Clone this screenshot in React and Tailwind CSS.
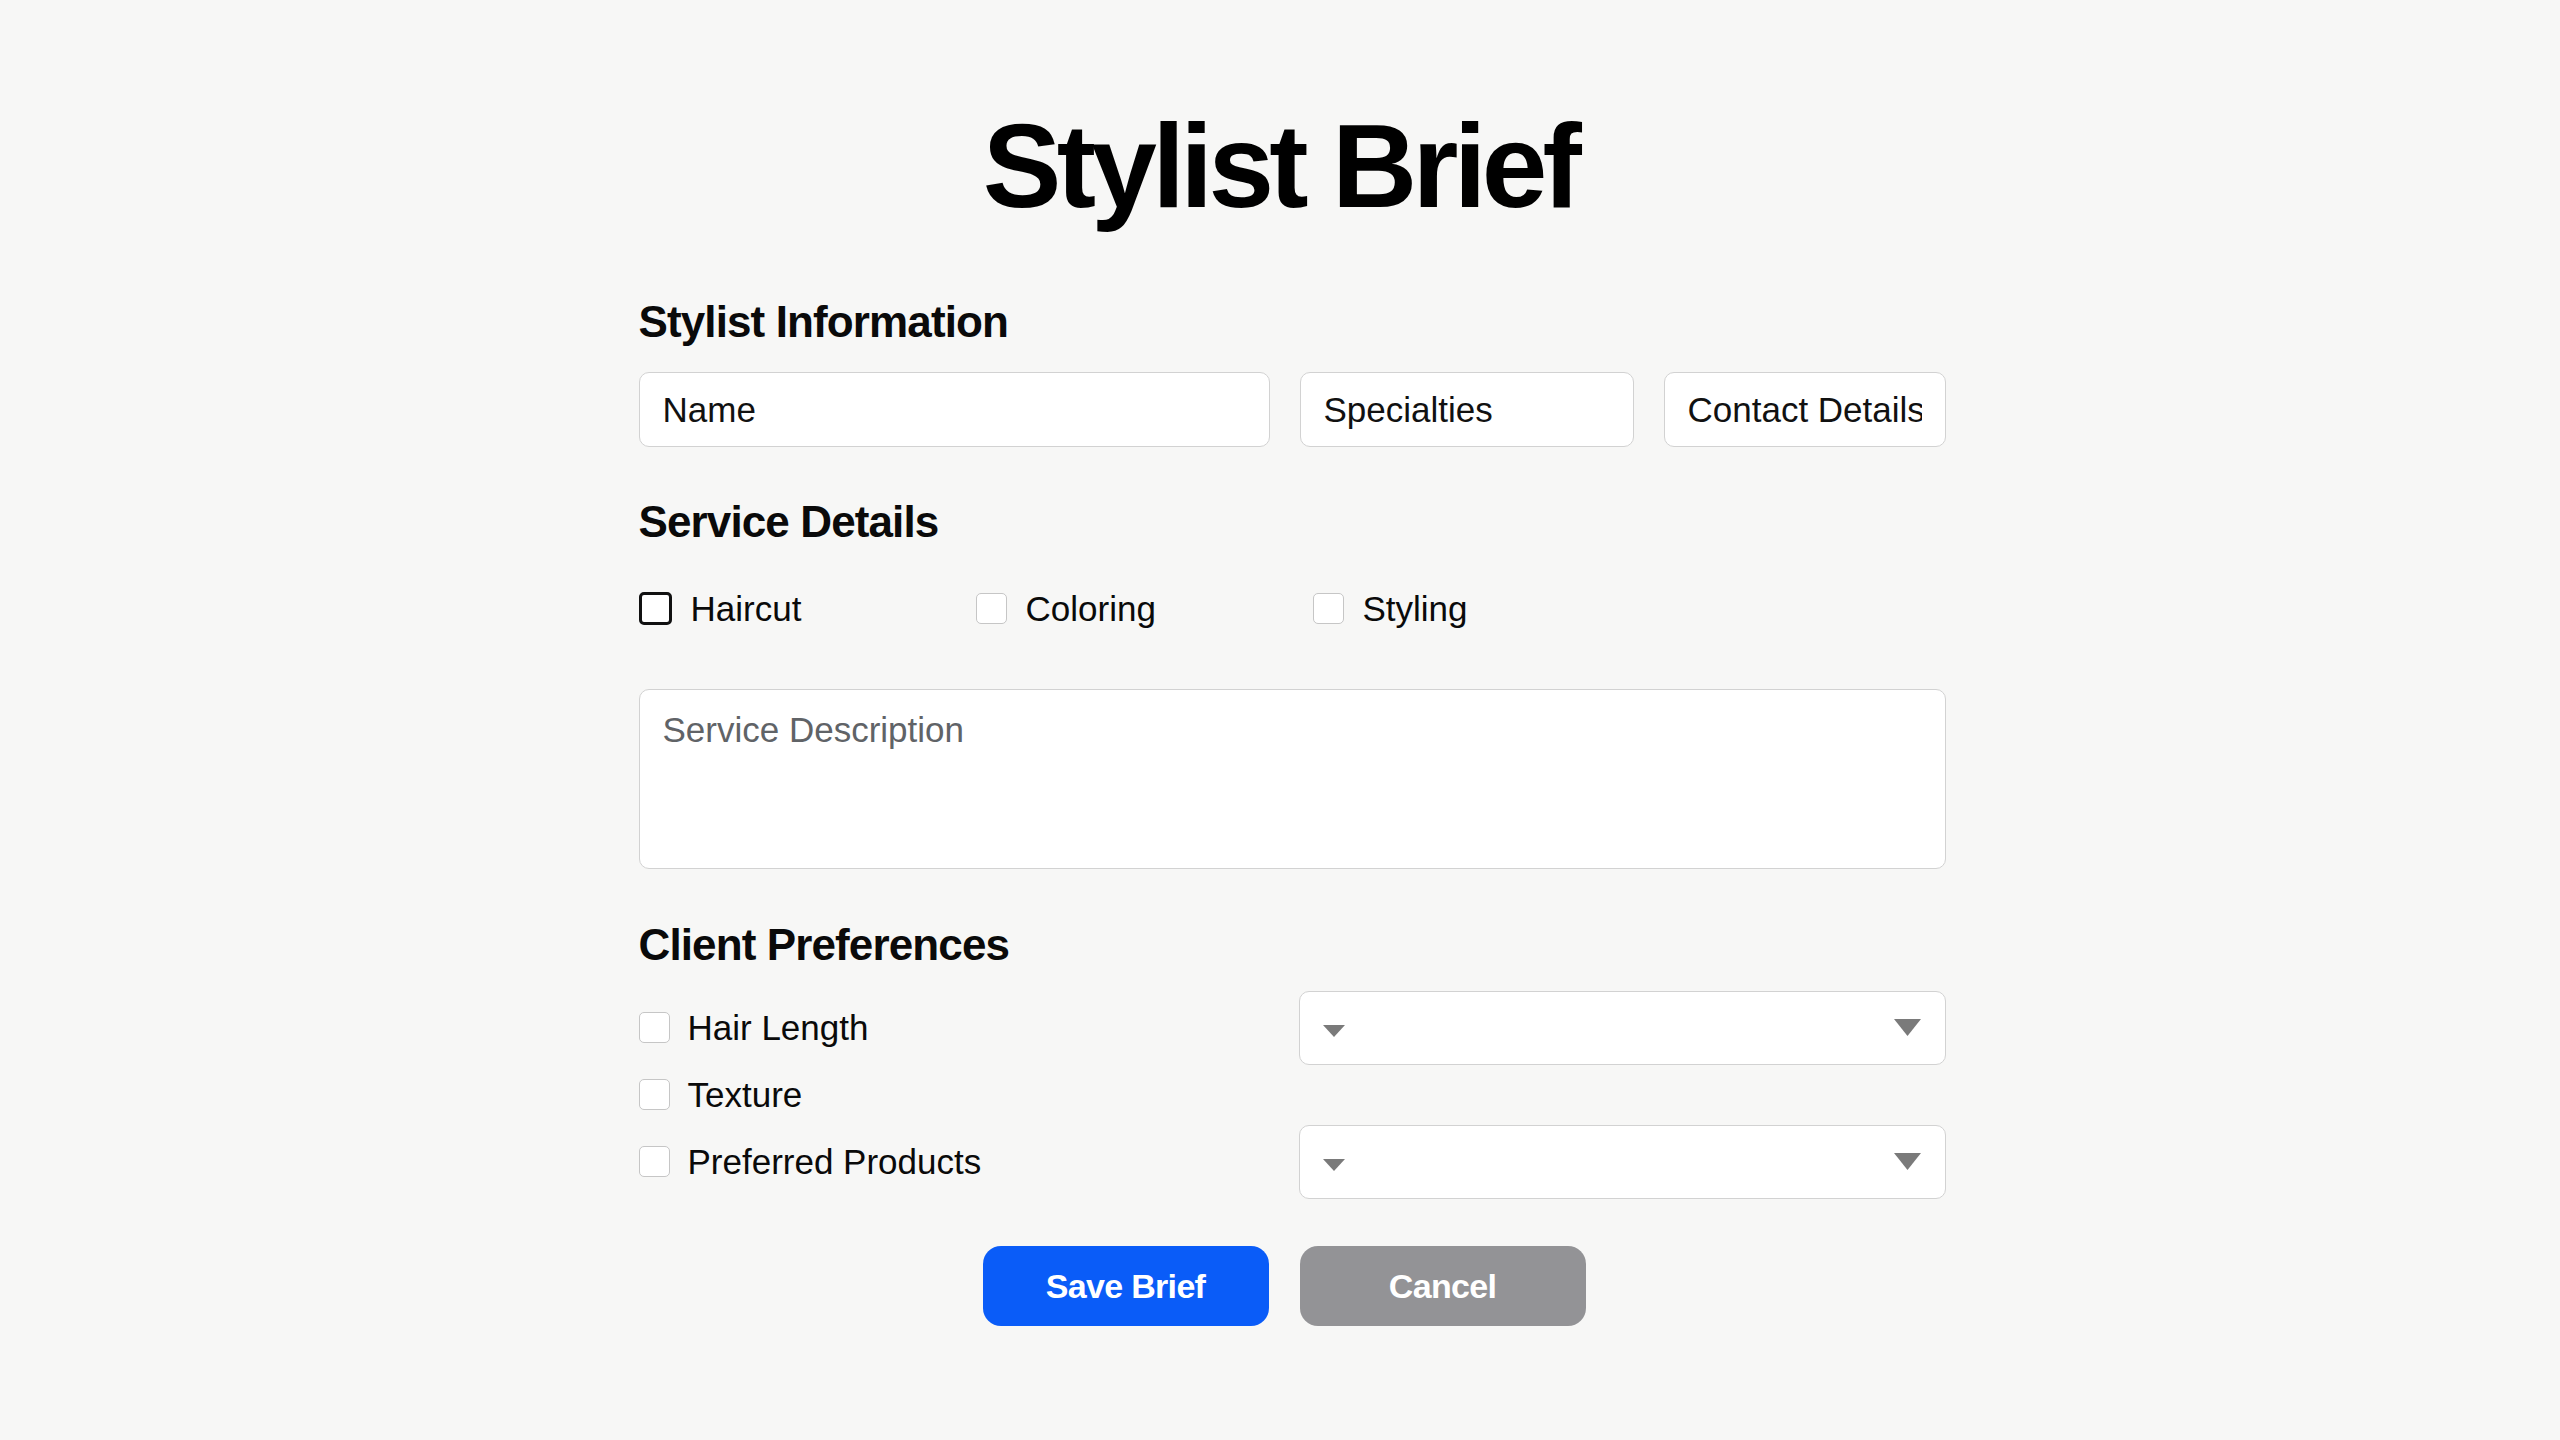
import { useState } from "react";

const heading = "text-[44px] font-bold leading-none tracking-[-0.02em] text-[#0a0a0a]";
const field =
  "h-[75px] rounded-[10px] border-[1.5px] border-[#d2d2d2] bg-white px-[23px] text-[35px] text-[#111] outline-none placeholder:text-[#111]";

const Checkbox = ({ checked, onChange, strong }) => (
  <button
    type="button"
    onClick={onChange}
    aria-pressed={checked}
    className={`flex shrink-0 items-center justify-center rounded-[5px] bg-white ${
      strong
        ? "h-[33px] w-[33px] border-[3px] border-[#111]"
        : "h-[31px] w-[31px] border-[1.5px] border-[#c6c6c6]"
    }`}
  >
    {checked && (
      <svg width="20" height="20" viewBox="0 0 20 20" fill="none">
        <path d="M4 10.5l4 4 8-9" stroke="#111" strokeWidth="2.5" strokeLinecap="round" strokeLinejoin="round" />
      </svg>
    )}
  </button>
);

const Select = () => (
  <div className="flex h-[74px] items-center justify-between rounded-[10px] border-[1.5px] border-[#d2d2d2] bg-white pl-[23px] pr-[24px]">
    <svg width="22" height="12" viewBox="0 0 22 12" className="mt-[6px]">
      <path d="M0 0h22L11 12z" fill="#7a7a7a" />
    </svg>
    <svg width="27" height="17" viewBox="0 0 27 17">
      <path d="M0 0h27L13.5 17z" fill="#7a7a7a" />
    </svg>
  </div>
);

const services = ["Haircut", "Coloring", "Styling"];

export default function App() {
  const [picked, setPicked] = useState({});
  const toggle = (key) => setPicked((p) => ({ ...p, [key]: !p[key] }));

  return (
    <div className="min-h-screen bg-[#f7f7f6] font-['Liberation_Sans',Arial,sans-serif] text-[#0a0a0a]">
      <div className="pt-[107px] pb-[100px]">
        <h1 className="text-center text-[118px] font-bold leading-none tracking-[-0.04em] text-black">
          Stylist Brief
        </h1>

        <div className="mx-auto w-[1331px] pl-[24px]">
          {/* stylist information */}
          <h2 className={`mt-[75px] ${heading}`}>Stylist Information</h2>
          <div className="mt-[28px] flex gap-[30px]">
            <input className={`${field} w-[631px]`} placeholder="Name" />
            <input className={`${field} w-[334px]`} placeholder="Specialties" />
            <input className={`${field} w-[282px]`} placeholder="Contact Details" />
          </div>

          {/* service details */}
          <h2 className={`mt-[53px] ${heading}`}>Service Details</h2>
          <div className="mt-[46px] flex h-[36px] items-center">
            {services.map((s, i) => (
              <label key={s} className="flex w-[337px] items-center gap-[19px] text-[35px] leading-none">
                <Checkbox checked={!!picked[s]} onChange={() => toggle(s)} strong={i === 0} />
                <span>{s}</span>
              </label>
            ))}
          </div>

          <textarea
            className="mt-[63px] block h-[180px] w-[1307px] resize-none rounded-[10px] border-[1.5px] border-[#d2d2d2] bg-white px-[23px] pt-[19px] text-[35px] leading-[1.2] text-[#111] outline-none placeholder:text-[#606367]"
            placeholder="Service Description"
          />

          {/* client preferences */}
          <h2 className={`mt-[54px] ${heading}`}>Client Preferences</h2>
          <div className="mt-[27px] grid grid-cols-[631px_647px] grid-rows-[67px_67px_67px] items-center gap-x-[29px]">
            <label className="flex items-center gap-[18px] text-[35px] leading-none">
              <Checkbox checked={!!picked.length} onChange={() => toggle("length")} />
              <span>Hair Length</span>
            </label>
            <Select />
            <label className="flex items-center gap-[18px] text-[35px] leading-none">
              <Checkbox checked={!!picked.texture} onChange={() => toggle("texture")} />
              <span>Texture</span>
            </label>
            <div />
            <label className="flex items-center gap-[18px] text-[35px] leading-none">
              <Checkbox checked={!!picked.products} onChange={() => toggle("products")} />
              <span>Preferred Products</span>
            </label>
            <Select />
          </div>
        </div>

        <div className="mt-[51px] flex justify-center gap-[31px] pl-[8px]">
          <button className="h-[80px] w-[286px] rounded-[18px] bg-[#0a5cf8] text-[34px] font-bold tracking-[-0.02em] text-white">
            Save Brief
          </button>
          <button className="h-[80px] w-[286px] rounded-[18px] bg-[#939396] text-[34px] font-bold tracking-[-0.02em] text-white">
            Cancel
          </button>
        </div>
      </div>
    </div>
  );
}
